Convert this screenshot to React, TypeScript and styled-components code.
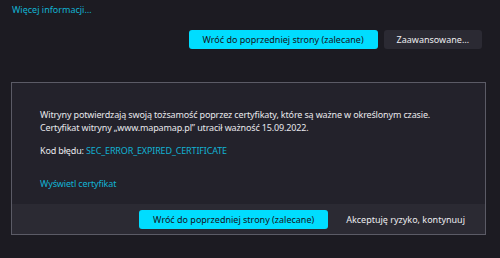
import styled, { createGlobalStyle } from 'styled-components';

const GlobalStyle = createGlobalStyle`
  html, body {
    margin: 0;
    padding: 0;
    background: #1c1b22;
  }
  body {
    font-family: "Noto Sans", "Open Sans", sans-serif;
    font-size: 9px;
    color: #e8e8ec;
  }
`;

const Page = styled.div`
  width: 500px;
  height: 258px;
  display: flex;
  flex-direction: column;
  box-sizing: border-box;
  padding-top: 4px;
`;

const Link = styled.a`
  color: #12b3d3;
  text-decoration: none;
  cursor: pointer;
`;

const TopLink = styled(Link)`
  margin-left: 12px;
  line-height: 12px;
`;

const ButtonRow = styled.div`
  display: flex;
  justify-content: flex-end;
  gap: 6px;
  margin-top: 14px;
  padding-right: 18px;
`;

const Button = styled.button<{ $primary?: boolean; $ghost?: boolean }>`
  height: 19px;
  padding: 0 14px;
  border: none;
  border-radius: 3px;
  font-family: inherit;
  font-size: 9px;
  cursor: pointer;
  background: ${(p) => (p.$primary ? '#00ddff' : p.$ghost ? 'transparent' : '#2b2a33')};
  color: ${(p) => (p.$primary ? '#15141a' : '#ececf0')};
`;

const SmallButton = styled(Button)`
  padding: 0 13px;
`;

const ErrorBox = styled.section`
  margin: 33px 14px 0 11px;
  border: 1px solid #5b5b66;
  background: #23222b;
  display: flex;
  flex-direction: column;
`;

const Body = styled.div`
  padding: 25px 28px 14px;
  display: flex;
  flex-direction: column;
  letter-spacing: -0.15px;
`;

const Para = styled.p`
  margin: 0;
  line-height: 13px;
`;

const CodeLine = styled(Para)`
  margin-top: 10px;
`;

const CertLink = styled(Link)`
  margin-top: 20px;
  line-height: 13px;
`;

const Footer = styled.div`
  height: 30px;
  background: #2b2a33;
  display: flex;
  align-items: center;
  justify-content: flex-end;
  gap: 4px;
  padding-right: 6px;
`;

export default function App() {
  return (
    <>
      <GlobalStyle />
      <Page>
        <TopLink>Więcej informacji…</TopLink>
        <ButtonRow>
          <Button $primary>Wróć do poprzedniej strony (zalecane)</Button>
          <SmallButton>Zaawansowane…</SmallButton>
        </ButtonRow>
        <ErrorBox>
          <Body>
            <Para>
              Witryny potwierdzają swoją tożsamość poprzez certyfikaty, które są ważne w określonym czasie.
            </Para>
            <Para>Certyfikat witryny „www.mapamap.pl” utracił ważność 15.09.2022.</Para>
            <CodeLine>
              Kod błędu: <Link>SEC_ERROR_EXPIRED_CERTIFICATE</Link>
            </CodeLine>
            <CertLink>Wyświetl certyfikat</CertLink>
          </Body>
          <Footer>
            <Button $primary>Wróć do poprzedniej strony (zalecane)</Button>
            <Button $ghost>Akceptuję ryzyko, kontynuuj</Button>
          </Footer>
        </ErrorBox>
      </Page>
    </>
  );
}
